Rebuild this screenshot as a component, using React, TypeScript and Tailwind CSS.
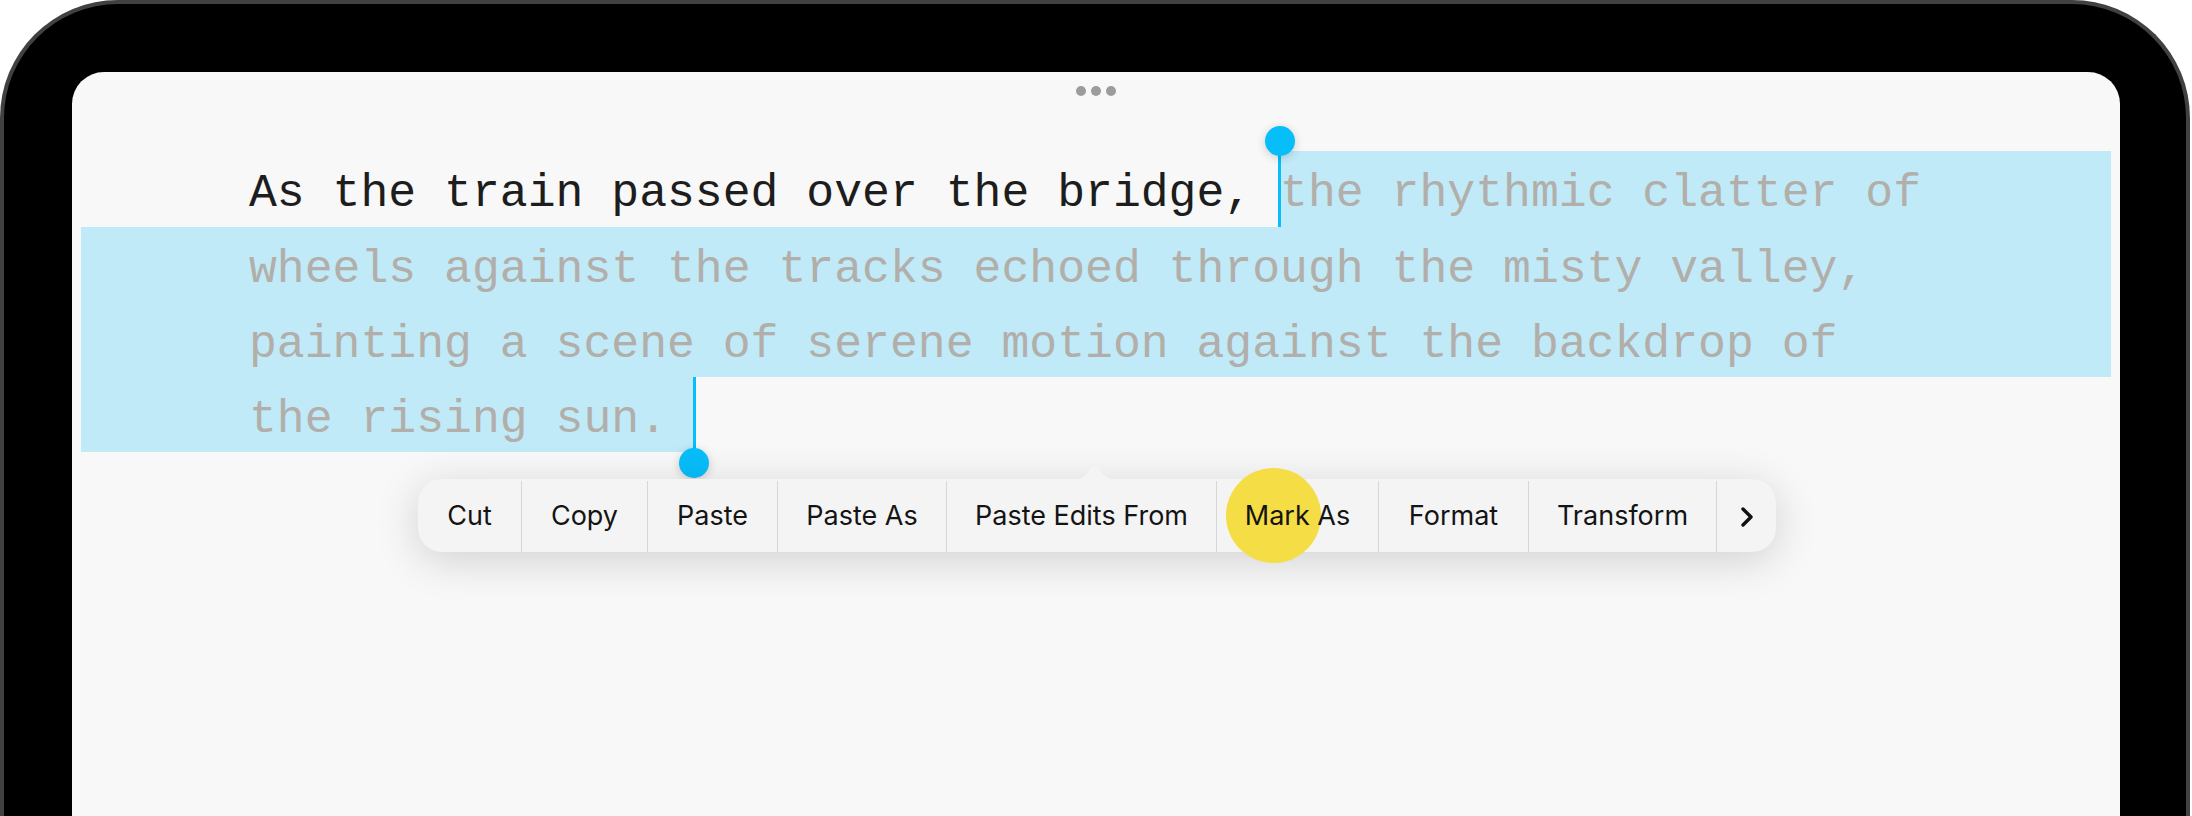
import React from "react";

const menuItems = [
  { label: "Cut", width: "w-[104px]" },
  { label: "Copy", width: "w-[126px]" },
  { label: "Paste", width: "w-[130px]" },
  { label: "Paste As", width: "w-[169px]" },
  { label: "Paste Edits From", width: "w-[270px]" },
  { label: "Mark As", width: "w-[162px]" },
  { label: "Format", width: "w-[150px]" },
  { label: "Transform", width: "w-[188px]" },
];

const Handle: React.FC<{ side: "start" | "end" }> = ({ side }) => {
  if (side === "start") {
    return (
      <>
        <div className="absolute left-[-2px] top-[-10px] h-[86px] w-[3px] bg-[#07befa]" />
        <div className="absolute left-[-15px] top-[-25px] h-[30px] w-[30px] rounded-full bg-[#07befa] shadow-[0_2px_10px_rgba(0,0,0,0.18)]" />
      </>
    );
  }
  return (
    <>
      <div className="absolute right-[-1px] top-0 h-[86px] w-[3px] bg-[#07befa]" />
      <div className="absolute right-[-14px] top-[71px] h-[30px] w-[30px] rounded-full bg-[#07befa] shadow-[0_2px_10px_rgba(0,0,0,0.18)]" />
    </>
  );
};

const App: React.FC = () => {
  return (
    <div className="relative h-[816px] w-[2192px] overflow-hidden bg-white">
      {/* device frame */}
      <div className="h-[1000px] w-[2190px] rounded-t-[118px] border-4 border-b-0 border-[#414141] bg-black pl-[68px] pr-[66px] pt-[68px]">
        {/* screen */}
        <div className="relative h-[1000px] rounded-t-[32px] bg-[#f8f8f8]">
          <div className="flex justify-center gap-[5px] pt-[14px]">
            <span className="h-[10px] w-[10px] rounded-full bg-[#9c9c9c]" />
            <span className="h-[10px] w-[10px] rounded-full bg-[#9c9c9c]" />
            <span className="h-[10px] w-[10px] rounded-full bg-[#9c9c9c]" />
          </div>

          <div className="mt-[55px] px-[9px] font-['Liberation_Mono',monospace] text-[46.45px] leading-[85px] text-[#b2aea9]">
            <div className="flex h-[76px]">
              <div className="whitespace-pre pl-[168px] text-[#1d1d1d]">As the train passed over the bridge, </div>
              <div className="relative flex-1 whitespace-pre bg-[#c0eaf8]">
                the rhythmic clatter of
                <Handle side="start" />
              </div>
            </div>
            <div className="h-[75px] whitespace-pre bg-[#c0eaf8] pl-[168px]">wheels against the tracks echoed through the misty valley,</div>
            <div className="h-[75px] whitespace-pre bg-[#c0eaf8] pl-[168px]">painting a scene of serene motion against the backdrop of</div>
            <div className="flex h-[75px]">
              <div className="relative whitespace-pre bg-[#c0eaf8] pl-[168px] pr-[28px]">
                the rising sun.
                <Handle side="end" />
              </div>
            </div>
          </div>

          {/* edit menu */}
          <div className="absolute left-[346px] top-[407px] flex h-[73px] rounded-[24px] bg-[#f4f4f4] pt-[2px] font-['Inter',sans-serif] text-[27px] text-[#141414] shadow-[0_8px_44px_rgba(0,0,0,0.16)]">
            <svg className="absolute left-[657px] top-[-13px]" width="40" height="14" viewBox="0 0 40 14">
              <path d="M0 14 C 11 14, 15 0, 20 0 C 25 0, 29 14, 40 14 Z" fill="#f4f4f4" />
            </svg>
            <div className="absolute left-[808px] top-[-11px] h-[95px] w-[95px] rounded-full bg-[#f5dd45]" />
            {menuItems.map((item) => (
              <div
                key={item.label}
                className={`relative flex items-center justify-center border-r border-[#d6d6d6] ${item.width}`}
              >
                {item.label}
              </div>
            ))}
            <div className="flex w-[59px] items-center justify-center">
              <svg width="14" height="20" viewBox="0 0 14 20">
                <polyline points="3,2 11,10 3,18" fill="none" stroke="#111" strokeWidth="3.4" strokeLinecap="round" strokeLinejoin="round" />
              </svg>
            </div>
          </div>
        </div>
      </div>
    </div>
  );
};

export default App;
